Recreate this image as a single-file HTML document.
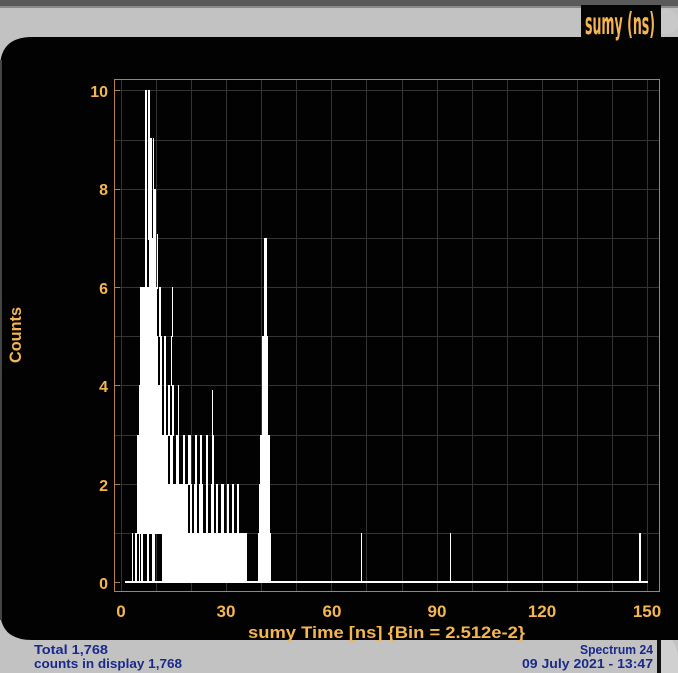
<!DOCTYPE html>
<html><head><style>
html,body{margin:0;padding:0;width:678px;height:673px;overflow:hidden;background:#c2c2c2}
svg{display:block}
</style></head><body>
<svg width="678" height="673" xmlns="http://www.w3.org/2000/svg" font-family="DejaVu Sans, Liberation Sans, sans-serif">
<rect width="678" height="673" fill="#c2c2c2"/>
<rect width="678" height="6" fill="#5a5a5a"/>
<rect y="6" width="678" height="2" fill="#8a8a8a"/>
<path d="M0 68 Q0 37 32 37 L678 37 L678 640 L32 640 Q0 640 0 610 Z" fill="#020202"/>
<rect x="0" y="60" width="2" height="560" fill="#444"/>
<rect x="581" y="5" width="80" height="34" fill="#050505"/>
<path d="M661 9 L665 9 Q678 9 678 22 Q678 34 665 34 L661 34 Z" fill="#c8c8c8"/>
<text x="585" y="34" font-size="30" fill="#f5b651" textLength="70" lengthAdjust="spacingAndGlyphs" font-weight="bold">sumy (ns)</text>
<rect x="657" y="640" width="4" height="33" fill="#111"/>
<path d="M661 640 L672 640 Q678 648 678 660 L678 673 L661 673 Z" fill="#d0d0d0"/>
<g stroke="#343434" stroke-width="1">
<line x1="114" y1="90.5" x2="660" y2="90.5"/><line x1="114" y1="189.5" x2="660" y2="189.5"/><line x1="114" y1="287.5" x2="660" y2="287.5"/><line x1="114" y1="385.5" x2="660" y2="385.5"/><line x1="114" y1="484.5" x2="660" y2="484.5"/>
<line x1="114" y1="140.5" x2="660" y2="140.5"/><line x1="114" y1="238.5" x2="660" y2="238.5"/><line x1="114" y1="336.5" x2="660" y2="336.5"/><line x1="114" y1="435.5" x2="660" y2="435.5"/><line x1="114" y1="533.5" x2="660" y2="533.5"/>
<line x1="121.5" y1="79" x2="121.5" y2="592"/><line x1="156.5" y1="79" x2="156.5" y2="592"/><line x1="191.5" y1="79" x2="191.5" y2="592"/><line x1="226.5" y1="79" x2="226.5" y2="592"/><line x1="261.5" y1="79" x2="261.5" y2="592"/><line x1="296.5" y1="79" x2="296.5" y2="592"/><line x1="331.5" y1="79" x2="331.5" y2="592"/><line x1="366.5" y1="79" x2="366.5" y2="592"/><line x1="402.5" y1="79" x2="402.5" y2="592"/><line x1="437.5" y1="79" x2="437.5" y2="592"/><line x1="472.5" y1="79" x2="472.5" y2="592"/><line x1="507.5" y1="79" x2="507.5" y2="592"/><line x1="542.5" y1="79" x2="542.5" y2="592"/><line x1="577.5" y1="79" x2="577.5" y2="592"/><line x1="612.5" y1="79" x2="612.5" y2="592"/><line x1="647.5" y1="79" x2="647.5" y2="592"/>
</g>
<g fill="#fff">
<rect x="125" y="581" width="523" height="2"/>
<rect x="162" y="533" width="85" height="49"/>
<rect x="258" y="533" width="13" height="49"/>
<rect x="132" y="533" width="1" height="49"/><rect x="135" y="533" width="2" height="49"/><rect x="139" y="533" width="1" height="49"/><rect x="141" y="533" width="2" height="49"/><rect x="147" y="533" width="2" height="49"/><rect x="152" y="533" width="3" height="49"/>
<rect x="361" y="533" width="1" height="49"/><rect x="450" y="533" width="1" height="49"/><rect x="639" y="533" width="2" height="49"/>
<rect x="137" y="484" width="25" height="50"/><rect x="162" y="484" width="26" height="50"/>
<rect x="190" y="484" width="2" height="50"/><rect x="194" y="484" width="3" height="50"/><rect x="199" y="484" width="4" height="50"/><rect x="206" y="484" width="2" height="50"/><rect x="211" y="484" width="3" height="50"/><rect x="216" y="484" width="2" height="50"/><rect x="221" y="484" width="3" height="50"/><rect x="227" y="484" width="2" height="50"/><rect x="232" y="484" width="2" height="50"/><rect x="237" y="484" width="2" height="50"/>
<rect x="259" y="484" width="11" height="50"/>
<rect x="137" y="435" width="31" height="50"/><rect x="170" y="435" width="3" height="50"/><rect x="176" y="435" width="3" height="50"/><rect x="183" y="435" width="2" height="50"/><rect x="188" y="435" width="3" height="50"/><rect x="195" y="435" width="2" height="50"/><rect x="200" y="435" width="2" height="50"/><rect x="206" y="435" width="2" height="50"/><rect x="212" y="435" width="2" height="50"/>
<rect x="260" y="435" width="10" height="50"/>
<rect x="139" y="385" width="23" height="51"/><rect x="164" y="385" width="2" height="51"/><rect x="168" y="385" width="2" height="51"/><rect x="172" y="385" width="2" height="51"/><rect x="178" y="385" width="1" height="51"/><rect x="212" y="390" width="1" height="46"/>
<rect x="140" y="336" width="18" height="50"/><rect x="160" y="336" width="2" height="50"/><rect x="164" y="336" width="2" height="50"/><rect x="171" y="336" width="1" height="50"/>
<rect x="262" y="336" width="6" height="100"/>
<rect x="140" y="287" width="17" height="50"/><rect x="159" y="287" width="2" height="50"/><rect x="172" y="287" width="1" height="50"/>
<rect x="264" y="238" width="3" height="100"/>
<rect x="145" y="238" width="2" height="50"/><rect x="149" y="238" width="5" height="50"/>
<rect x="149" y="138" width="3" height="100"/><rect x="153" y="138" width="1" height="100"/>
<rect x="145" y="90" width="2" height="150"/><rect x="148" y="90" width="2" height="150"/>
<rect x="154" y="189" width="2" height="100"/><rect x="157" y="234" width="1" height="55"/>
</g>
<rect x="114.5" y="79.5" width="545" height="512" fill="none" stroke="#b0814a" stroke-width="1"/>
<g stroke="#b0814a" stroke-width="1">
<line x1="114" y1="90.5" x2="120" y2="90.5"/><line x1="114" y1="189.5" x2="120" y2="189.5"/><line x1="114" y1="287.5" x2="120" y2="287.5"/><line x1="114" y1="385.5" x2="120" y2="385.5"/><line x1="114" y1="484.5" x2="120" y2="484.5"/><line x1="114" y1="582.5" x2="120" y2="582.5"/>
</g>
<g fill="#f5b651" font-weight="bold" font-size="16" text-anchor="end" font-family="Liberation Sans, sans-serif">
<text x="108" y="97">10</text><text x="108" y="195">8</text><text x="108" y="294">6</text><text x="108" y="392">4</text><text x="108" y="491">2</text><text x="108" y="589">0</text>
</g>
<g fill="#f5b651" font-weight="bold" font-size="17" font-family="Liberation Sans, sans-serif" text-anchor="middle">
<text x="121" y="617">0</text><text x="226" y="617">30</text><text x="332" y="617">60</text><text x="437" y="617">90</text><text x="542" y="617">120</text><text x="647" y="617">150</text>
</g>
<g fill="#f5b651" font-weight="bold" font-size="17" font-family="Liberation Sans, sans-serif">
<text x="248" y="638" textLength="277" lengthAdjust="spacingAndGlyphs">sumy Time [ns] {Bin = 2.512e-2}</text>
<text x="21" y="363" transform="rotate(-90 21 363)" textLength="56" lengthAdjust="spacingAndGlyphs">Counts</text>
</g>
<g fill="#1a2a8a" font-weight="bold" font-size="13" font-family="Liberation Sans, sans-serif">
<text x="34" y="654" textLength="74" lengthAdjust="spacingAndGlyphs">Total 1,768</text><text x="34" y="668" textLength="148" lengthAdjust="spacingAndGlyphs">counts in display 1,768</text>
<text x="580" y="654" textLength="73" lengthAdjust="spacingAndGlyphs">Spectrum 24</text><text x="522" y="668" textLength="131" lengthAdjust="spacingAndGlyphs">09 July 2021 - 13:47</text>
</g>
</svg>
</body></html>
